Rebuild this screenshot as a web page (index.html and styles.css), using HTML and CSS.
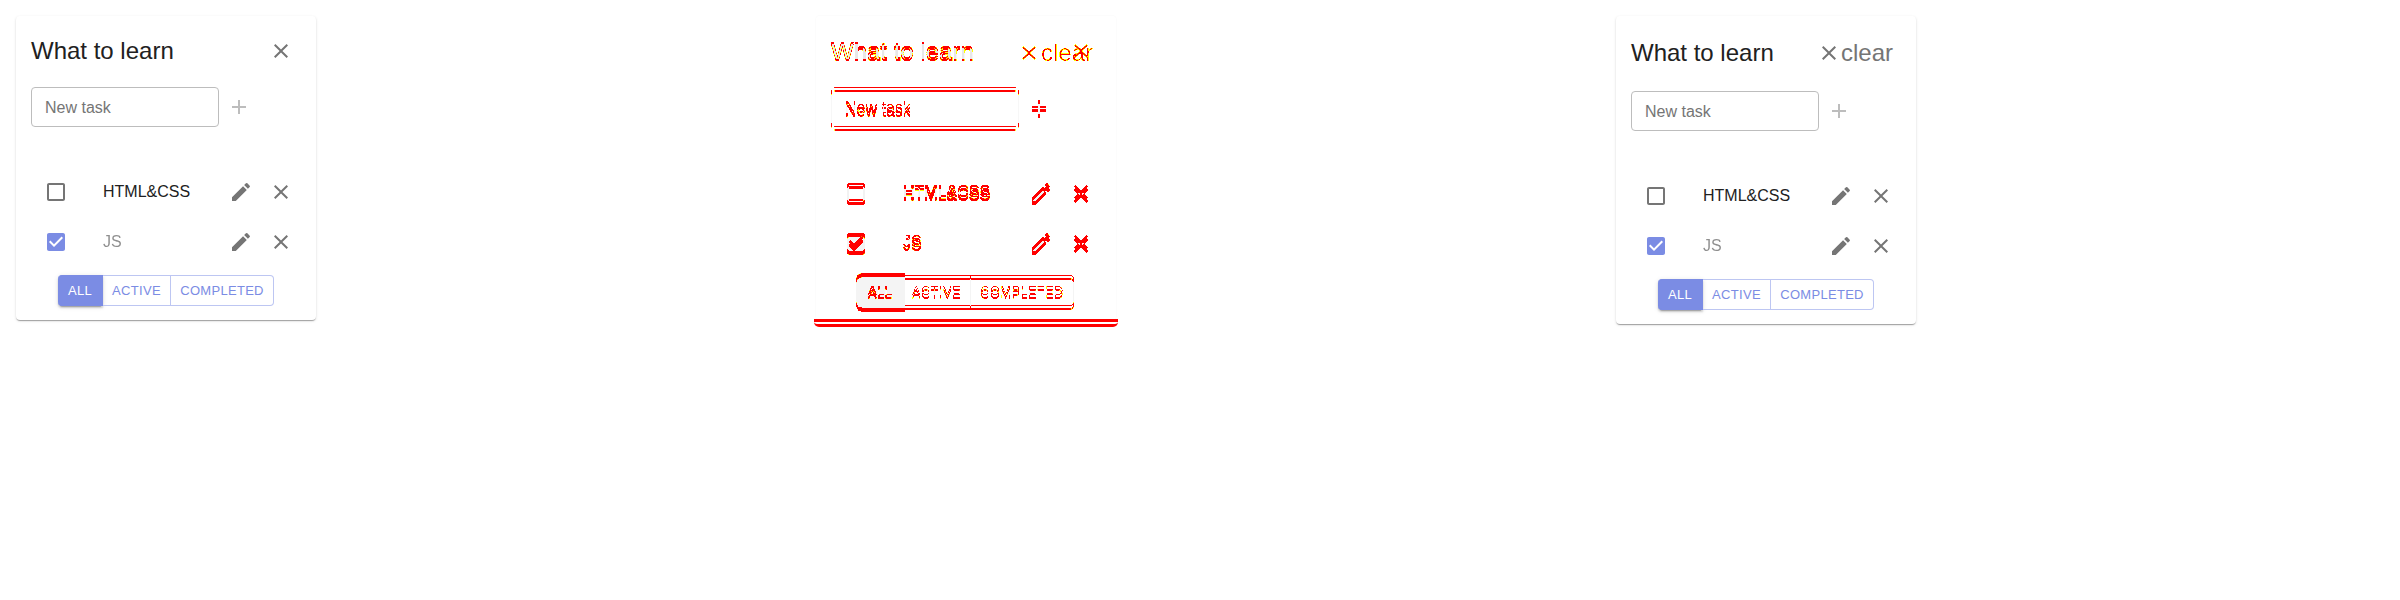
FILE: index.html
```html
<!DOCTYPE html>
<html lang="en">
<head>
<meta charset="utf-8">
<title>Todolist comparison</title>
<link rel="stylesheet" href="styles.css">
</head>
<body>
<svg class="defs" width="0" height="0" aria-hidden="true">
  <symbol id="close" viewBox="0 0 24 24"><path d="M19 6.41 17.59 5 12 10.59 6.41 5 5 6.41 10.59 12 5 17.59 6.41 19 12 13.41 17.59 19 19 17.59 13.41 12z"/></symbol>
  <symbol id="add" viewBox="0 0 24 24"><path d="M19 13h-6v6h-2v-6H5v-2h6V5h2v6h6v2z"/></symbol>
  <symbol id="edit" viewBox="0 0 24 24"><path d="M3 17.25V21h3.75L17.81 9.94l-3.75-3.75L3 17.25zM20.71 7.04c.39-.39.39-1.02 0-1.41l-2.34-2.34a.9959.9959 0 0 0-1.41 0l-1.83 1.83 3.75 3.75 1.83-1.83z"/></symbol>
  <symbol id="box" viewBox="0 0 24 24"><path d="M19 5v14H5V5h14m0-2H5c-1.1 0-2 .9-2 2v14c0 1.1.9 2 2 2h14c1.1 0 2-.9 2-2V5c0-1.1-.9-2-2-2z"/></symbol>
  <symbol id="checked" viewBox="0 0 24 24"><path d="M19 3H5c-1.11 0-2 .9-2 2v14c0 1.1.89 2 2 2h14c1.11 0 2-.9 2-2V5c0-1.1-.89-2-2-2zm-9 14l-5-5 1.41-1.41L10 14.17l7.59-7.59L19 8l-9 9z"/></symbol>
  <!-- Changed pixels: red where strong, yellow on soft edges, pale grey where unchanged -->
  <filter id="shift2" x="-5%" y="-30%" width="110%" height="160%" color-interpolation-filters="sRGB">
    <feColorMatrix values="0 0 0 0 0  0 0 0 0 0  0 0 0 0 0  -.8 -.8 -.8 2.4 0" result="a"/>
    <feOffset in="a" dy="2" result="b"/>
    <feComposite in="a" in2="b" operator="arithmetic" k2="1" k3="-1" result="ab"/>
    <feComposite in="b" in2="a" operator="arithmetic" k2="1" k3="-1" result="ba"/>
    <feComposite in="ab" in2="ba" operator="arithmetic" k2="1" k3="1" result="d"/>
    <feColorMatrix in="d" values="0 0 0 0 1  0 0 0 0 1  0 0 0 0 0  0 0 0 40 -3" result="yellow"/>
    <feColorMatrix in="d" values="0 0 0 0 1  0 0 0 0 0  0 0 0 0 0  0 0 0 40 -24" result="red"/>
    <feColorMatrix in="a" values="0 0 0 0 0  0 0 0 0 0  0 0 0 0 0  0 0 0 .09 0" result="grey"/>
    <feMerge><feMergeNode in="grey"/><feMergeNode in="yellow"/><feMergeNode in="red"/></feMerge>
  </filter>
  <filter id="shift3" x="-5%" y="-5%" width="110%" height="115%" color-interpolation-filters="sRGB">
    <feColorMatrix values="0 0 0 0 0  0 0 0 0 0  0 0 0 0 0  -.8 -.8 -.8 2.4 0" result="a"/>
    <feOffset in="a" dy="3" result="b3"/>
    <feOffset in="a" dy="4" result="b4"/>
    <feComposite in="b3" in2="b4" operator="arithmetic" k2=".6" k3=".4" result="b"/>
    <feComposite in="a" in2="b" operator="arithmetic" k2="1" k3="-1" result="ab"/>
    <feComposite in="b" in2="a" operator="arithmetic" k2="1" k3="-1" result="ba"/>
    <feComposite in="ab" in2="ba" operator="arithmetic" k2="1" k3="1" result="d"/>
    <feColorMatrix in="d" values="0 0 0 0 1  0 0 0 0 1  0 0 0 0 0  0 0 0 40 -3" result="yellow"/>
    <feColorMatrix in="d" values="0 0 0 0 1  0 0 0 0 0  0 0 0 0 0  0 0 0 40 -8.5" result="red"/>
    <feColorMatrix in="a" values="0 0 0 0 0  0 0 0 0 0  0 0 0 0 0  0 0 0 .05 0" result="grey"/>
    <feMerge><feMergeNode in="grey"/><feMergeNode in="yellow"/><feMergeNode in="red"/></feMerge>
  </filter>
  <filter id="added" x="-10%" y="-20%" width="120%" height="140%" color-interpolation-filters="sRGB">
    <feColorMatrix values="0 0 0 0 0  0 0 0 0 0  0 0 0 0 0  -.62 -.62 -.62 1.86 0" result="a"/>
    <feColorMatrix in="a" values="0 0 0 0 1  0 0 0 0 1  0 0 0 0 0  0 0 0 40 -1" result="yellow"/>
    <feColorMatrix in="a" values="0 0 0 0 1  0 0 0 0 0  0 0 0 0 0  0 0 0 40 -30" result="red"/>
    <feMerge><feMergeNode in="yellow"/><feMergeNode in="red"/></feMerge>
  </filter>
</svg>

<main class="compare">
  <section class="panel">
    <article class="card">
      <header class="head"><h3 class="title">What to learn</h3><span class="remove"><svg class="icon"><use href="#close"/></svg></span></header>
      <div class="body">
        <div class="add"><div class="field">New task</div><svg class="icon plus"><use href="#add"/></svg></div>
        <ul class="tasks">
          <li class="task"><svg class="icon check"><use href="#box"/></svg><span class="name">HTML&amp;CSS</span><svg class="icon"><use href="#edit"/></svg><svg class="icon"><use href="#close"/></svg></li>
          <li class="task done"><svg class="icon check"><use href="#checked"/></svg><span class="name">JS</span><svg class="icon"><use href="#edit"/></svg><svg class="icon"><use href="#close"/></svg></li>
        </ul>
        <div class="filters"><span class="btn all">ALL</span><span class="btn active">ACTIVE</span><span class="btn completed">COMPLETED</span></div>
      </div>
    </article>
  </section>

  <section class="panel">
    <article class="card diff">
      <header class="head"><h3 class="title">What to learn</h3><span class="clear"><svg class="icon"><use href="#close"/></svg>clear</span><svg class="icon old-close"><use href="#close"/></svg></header>
      <div class="body">
        <div class="add"><div class="field">New task</div><svg class="icon plus"><use href="#add"/></svg></div>
        <ul class="tasks">
          <li class="task"><svg class="icon check"><use href="#box"/></svg><span class="name">HTML&amp;CSS</span><svg class="icon"><use href="#edit"/></svg><svg class="icon"><use href="#close"/></svg></li>
          <li class="task done"><svg class="icon check"><use href="#checked"/></svg><span class="name">JS</span><svg class="icon"><use href="#edit"/></svg><svg class="icon"><use href="#close"/></svg></li>
        </ul>
        <div class="filters"><span class="btn all">ALL</span><span class="btn active">ACTIVE</span><span class="btn completed">COMPLETED</span></div>
      </div>
      <div class="edge"></div>
    </article>
  </section>

  <section class="panel">
    <article class="card tall">
      <header class="head"><h3 class="title">What to learn</h3><span class="clear"><svg class="icon"><use href="#close"/></svg>clear</span></header>
      <div class="body">
        <div class="add"><div class="field">New task</div><svg class="icon plus"><use href="#add"/></svg></div>
        <ul class="tasks">
          <li class="task"><svg class="icon check"><use href="#box"/></svg><span class="name">HTML&amp;CSS</span><svg class="icon"><use href="#edit"/></svg><svg class="icon"><use href="#close"/></svg></li>
          <li class="task done"><svg class="icon check"><use href="#checked"/></svg><span class="name">JS</span><svg class="icon"><use href="#edit"/></svg><svg class="icon"><use href="#close"/></svg></li>
        </ul>
        <div class="filters"><span class="btn all">ALL</span><span class="btn active">ACTIVE</span><span class="btn completed">COMPLETED</span></div>
      </div>
    </article>
  </section>
</main>
</body>
</html>
```

FILE: styles.css
```css
* { box-sizing: border-box; }
body {
  margin: 0;
  background: #fff;
  color: #212121;
  font: 16px/24px "Liberation Sans", Arial, sans-serif;
}
.defs { position: absolute; }
.compare { display: flex; height: 600px; overflow: hidden; }
.panel { width: 800px; padding: 16px; }
.card {
  width: 300px;
  height: 304px;
  padding: 15px;
  border-radius: 4px;
  background: #fff;
  box-shadow: 0 2px 1px -1px rgba(0,0,0,.2), 0 1px 1px rgba(0,0,0,.14), 0 1px 3px rgba(0,0,0,.12);
}
.icon { display: block; flex: none; width: 24px; height: 24px; fill: #757575; }

.head { display: flex; align-items: center; justify-content: space-between; height: 40px; }
.title { margin: 0; font-size: 24px; line-height: 32px; font-weight: 400; }
.remove { margin-right: 8px; }
.clear {
  display: flex;
  align-items: center;
  margin-right: 8px;
  color: #757575;
  font-size: 24px;
  line-height: 32px;
}

.body { padding-top: 16px; }
.add { display: flex; align-items: center; gap: 8px; height: 40px; }
.field {
  width: 188px;
  height: 40px;
  padding: 8px 13px 6px;
  border: 1px solid #bdbdbd;
  border-radius: 4px;
  color: #757575;
}
.plus { fill: #bdbdbd; }

.tasks { margin: 40px 0 0; padding: 0; list-style: none; }
.task { display: flex; align-items: center; gap: 16px; height: 50px; padding: 0 8px 0 13px; }
.check { margin-right: 19px; }
.name { flex: 1; }
.done .name { opacity: .5; }
.done .check { fill: #7b8ce4; }

.filters { display: flex; margin: 8px 0 0 27px; }
.btn {
  height: 31px;
  border: 1px solid #bdc6f2;
  border-left-width: 0;
  color: #7b8ce4;
  font-size: 13px;
  line-height: 29px;
  letter-spacing: .3px;
  text-align: center;
}
.all {
  width: 45px;
  border-color: #7b8ce4;
  border-radius: 4px 0 0 4px;
  background: #7b8ce4;
  color: #fff;
  box-shadow: 0 3px 1px -2px rgba(0,0,0,.2), 0 2px 2px rgba(0,0,0,.14), 0 1px 5px rgba(0,0,0,.12);
}
.active { width: 68px; }
.completed { width: 103px; border-radius: 0 4px 4px 0; }

.tall { height: 308px; }
.tall .head { height: 43.5px; }
.tall .title { padding-top: 1px; }
.tall .clear { padding-top: 1px; }

.diff { position: relative; box-shadow: 0 0 0 1px #fcfcfc; }
.diff .title { filter: url(#shift2); }
.diff .clear { margin-top: 4px; filter: url(#added); }
.diff .old-close { position: absolute; left: 253px; top: 23px; filter: url(#added); }
.diff .body { filter: url(#shift3); }
.diff .btn { border-color: #7b8ce4; }
.diff .all { box-shadow: 0 0 0 2px #7b8ce4; }
.edge {
  position: absolute;
  left: -2px;
  top: 301px;
  width: 304px;
  height: 10px;
  border-bottom: 8px double #f00;
  border-radius: 0 0 5px 5px;
}
```
